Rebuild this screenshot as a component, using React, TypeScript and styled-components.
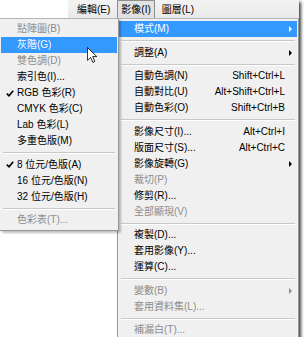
import styled, { createGlobalStyle } from "styled-components";

type Entry =
  | "sep"
  | {
      label: string;
      shortcut?: string;
      sub?: boolean;
      disabled?: boolean;
      active?: boolean;
      checked?: boolean;
      cursor?: boolean;
    };

const modeItems: Entry[] = [
  { label: "點陣圖(B)", disabled: true },
  { label: "灰階(G)", active: true, cursor: true },
  { label: "雙色調(D)", disabled: true },
  { label: "索引色(I)..." },
  { label: "RGB 色彩(R)", checked: true },
  { label: "CMYK 色彩(C)" },
  { label: "Lab 色彩(L)" },
  { label: "多重色版(M)" },
  "sep",
  { label: "8 位元/色版(A)", checked: true },
  { label: "16 位元/色版(N)" },
  { label: "32 位元/色版(H)" },
  "sep",
  { label: "色彩表(T)...", disabled: true },
];

const imageItems: Entry[] = [
  { label: "模式(M)", sub: true, active: true },
  "sep",
  { label: "調整(A)", sub: true },
  "sep",
  { label: "自動色調(N)", shortcut: "Shift+Ctrl+L" },
  { label: "自動對比(U)", shortcut: "Alt+Shift+Ctrl+L" },
  { label: "自動色彩(O)", shortcut: "Shift+Ctrl+B" },
  "sep",
  { label: "影像尺寸(I)...", shortcut: "Alt+Ctrl+I" },
  { label: "版面尺寸(S)...", shortcut: "Alt+Ctrl+C" },
  { label: "影像旋轉(G)", sub: true },
  { label: "裁切(P)", disabled: true },
  { label: "修剪(R)..." },
  { label: "全部顯現(V)", disabled: true },
  "sep",
  { label: "複製(D)..." },
  { label: "套用影像(Y)..." },
  { label: "運算(C)..." },
  "sep",
  { label: "變數(B)", sub: true, disabled: true },
  { label: "套用資料集(L)...", disabled: true },
  "sep",
  { label: "補漏白(T)...", disabled: true },
];

const CursorIcon = () => (
  <Cursor width="10" height="16" viewBox="0 0 12 19">
    <path
      d="M0.5 0.5 L0.5 16 L4.3 12.4 L7 18.3 L9.4 17.2 L6.8 11.4 L11.8 11.4 Z"
      fill="#fff"
      stroke="#000"
      strokeWidth="1"
      strokeLinejoin="round"
    />
  </Cursor>
);

const CheckIcon = () => (
  <svg width="8" height="7" viewBox="0 0 8 7">
    <path d="M0.8 3.6 L3 5.8 L7.2 0.8" fill="none" stroke="#000" strokeWidth="1.6" />
  </svg>
);

export default function App() {
  return (
    <>
      <GlobalStyle />
      <Frame>
        <TopBar>
          <Blank />
          <MenuBar>
            <BarItem>編輯(E)</BarItem>
            <BarItem $pressed>影像(I)</BarItem>
            <BarItem>圖層(L)</BarItem>
          </MenuBar>
        </TopBar>
        <Menus>
          <SubMenu>
            {modeItems.map((it, i) =>
              it === "sep" ? (
                <Separator key={i} />
              ) : (
                <SubRow key={i} $active={!!it.active} $disabled={!!it.disabled}>
                  <CheckCol>{it.checked && <CheckIcon />}</CheckCol>
                  <span>{it.label}</span>
                  {it.cursor && <CursorIcon />}
                </SubRow>
              )
            )}
          </SubMenu>
          <MainMenu>
            {imageItems.map((it, i) =>
              it === "sep" ? (
                <Separator key={i} />
              ) : (
                <MainRow key={i} $active={!!it.active} $disabled={!!it.disabled}>
                  <span>{it.label}</span>
                  <Shortcut>{it.shortcut}</Shortcut>
                  <ArrowCol>{it.sub && <Arrow />}</ArrowCol>
                </MainRow>
              )
            )}
          </MainMenu>
        </Menus>
      </Frame>
    </>
  );
}

const GlobalStyle = createGlobalStyle`
  html, body {
    margin: 0;
    padding: 0;
    background: #fff;
  }
  body {
    font-family: "Liberation Sans", "Noto Sans CJK TC", sans-serif;
    font-size: 10px;
    color: #000;
  }
`;

const Frame = styled.div`
  width: 299px;
  height: 337px;
  overflow: hidden;
  background: #fff;
  box-shadow: 2px 2px 3px rgba(0, 0, 0, 0.75);
  display: flex;
  flex-direction: column;
`;

const TopBar = styled.div`
  display: flex;
  height: 18px;
  flex-shrink: 0;
`;

const Blank = styled.div`
  width: 68px;
  background: #fff;
`;

const MenuBar = styled.div`
  flex: 1;
  display: flex;
  align-items: stretch;
  padding-left: 5px;
  gap: 3px;
  background: linear-gradient(#f3f3f3, #e9e9e9);
`;

const BarItem = styled.div<{ $pressed?: boolean }>`
  display: flex;
  align-items: center;
  padding: 0 3px;
  line-height: 16px;
  border: 1px solid ${(p) => (p.$pressed ? "#8e8f8f" : "transparent")};
  border-bottom: none;
  background: ${(p) => (p.$pressed ? "#e2e2e2" : "transparent")};
`;

const Menus = styled.div`
  flex: 1;
  display: flex;
  align-items: flex-start;
  min-height: 0;
`;

const SubMenu = styled.div`
  position: relative;
  z-index: 2;
  width: 116px;
  flex-shrink: 0;
  background: #f0f0f0;
  border-top: 1px solid #b5b5b5;
  border-right: 1px solid #979797;
  border-bottom: 1px solid #979797;
  padding: 2px 1px 2px 1px;
  box-shadow: 2px 2px 2px rgba(0, 0, 0, 0.25);
`;

const MainMenu = styled.div`
  flex: 1;
  align-self: stretch;
  margin-left: -2px;
  background: #f0f0f0;
  border-top: 1px solid #b5b5b5;
  border-left: 1px solid #979797;
  border-right: 1px solid #979797;
  padding: 2px 1px;
`;

const Row = styled.div<{ $active: boolean; $disabled: boolean }>`
  position: relative;
  height: 16px;
  line-height: 16px;
  white-space: nowrap;
  background: ${(p) => (p.$active ? "#3399ff" : "transparent")};
  color: ${(p) => (p.$active ? "#fff" : p.$disabled ? "#8d8d8d" : "#000")};
`;

const SubRow = styled(Row)`
  display: flex;
  align-items: center;
`;

const MainRow = styled(Row)`
  display: grid;
  grid-template-columns: 1fr auto 12px;
  align-items: center;
  padding-left: 15px;
`;

const CheckCol = styled.span`
  width: 15px;
  display: flex;
  justify-content: center;
  padding-left: 1px;
`;

const Shortcut = styled.span`
  text-align: right;
`;

const ArrowCol = styled.span`
  display: flex;
  align-items: center;
  padding-left: 4px;
`;

const Arrow = styled.span`
  width: 0;
  height: 0;
  border-left: 3px solid currentColor;
  border-top: 3px solid transparent;
  border-bottom: 3px solid transparent;
`;

const Separator = styled.div`
  height: 0;
  margin: 3px 2px 2.5px;
  border-top: 1px solid #c8c8c8;
  border-bottom: 1px solid #fff;
`;

const Cursor = styled.svg`
  position: absolute;
  left: 86px;
  top: 10px;
  z-index: 3;
`;
